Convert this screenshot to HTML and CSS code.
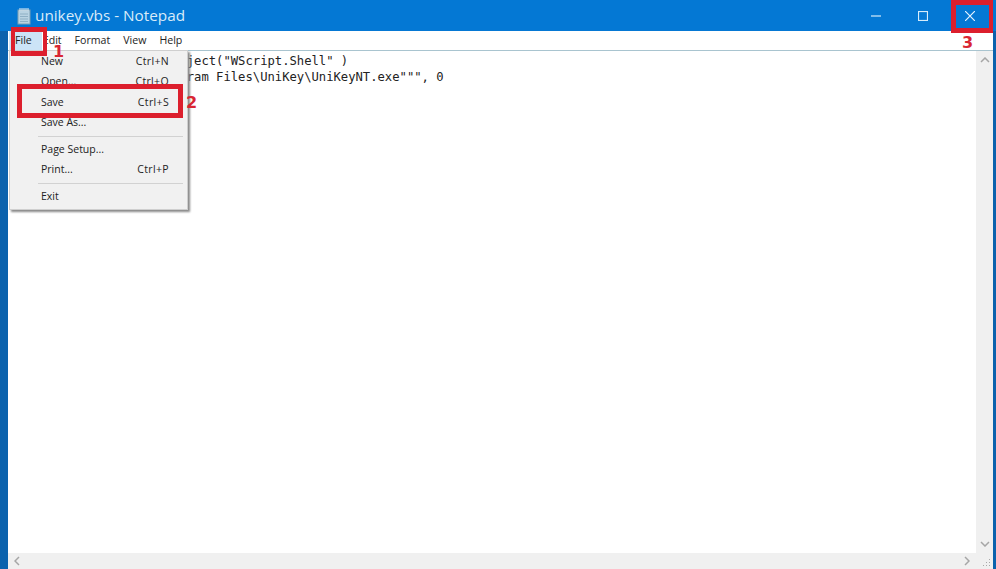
FILE: index.html
```html
<!DOCTYPE html>
<html lang="en">
<head>
<meta charset="utf-8">
<title>unikey.vbs - Notepad</title>
<link rel="stylesheet" href="styles.css">
</head>
<body>
<div class="window">
  <header class="titlebar">
    <svg class="app-icon" width="16" height="18" viewBox="0 0 16 18">
      <rect x="2" y="3" width="12" height="14" fill="#b9d3e2" stroke="#7f9fb2"/>
      <path d="M4 1v3M6 1v3M8 1v3M10 1v3M12 1v3" stroke="#e8f2f8" stroke-width="1"/>
      <path d="M4 7h8M4 9.5h8M4 12h8M4 14.5h8" stroke="#8fb0c4"/>
    </svg>
    <span class="title">unikey.vbs - Notepad</span>
    <div class="controls">
      <button class="ctl"><svg width="10" height="10" viewBox="0 0 10 10"><path d="M0 5h10" stroke="#d6ecfb" stroke-width="1.2"/></svg></button>
      <button class="ctl"><svg width="10" height="10" viewBox="0 0 10 10"><rect x=".5" y=".5" width="9" height="9" fill="none" stroke="#d6ecfb" stroke-width="1.2"/></svg></button>
      <button class="ctl"><svg width="10" height="10" viewBox="0 0 10 10"><path d="M0 0l10 10M10 0L0 10" stroke="#e6f4ff" stroke-width="1.2"/></svg></button>
    </div>
  </header>
  <nav class="menubar">
    <span class="mi active">File</span>
    <span class="mi">Edit</span>
    <span class="mi">Format</span>
    <span class="mi">View</span>
    <span class="mi">Help</span>
  </nav>
  <div class="client">
    <div class="editor-row">
      <pre class="editor">Set WshShell = CreateObject("WScript.Shell" )
WshShell.Run """C:\Program Files\UniKey\UniKeyNT.exe""", 0</pre>
      <div class="vscroll">
        <svg width="10" height="6" viewBox="0 0 10 6"><path d="M1 5l4-4 4 4" fill="none" stroke="#a6a6a6" stroke-width="1.5"/></svg>
        <svg width="10" height="6" viewBox="0 0 10 6"><path d="M1 1l4 4 4-4" fill="none" stroke="#a6a6a6" stroke-width="1.5"/></svg>
      </div>
    </div>
    <div class="hrow">
      <div class="hscroll">
        <svg width="6" height="10" viewBox="0 0 6 10"><path d="M5 1L1 5l4 4" fill="none" stroke="#a6a6a6" stroke-width="1.5"/></svg>
        <svg width="6" height="10" viewBox="0 0 6 10"><path d="M1 1l4 4-4 4" fill="none" stroke="#a6a6a6" stroke-width="1.5"/></svg>
      </div>
      <div class="grip">
        <svg width="10" height="10" viewBox="0 0 10 10"><path d="M8 1h1v1H8zM5 4h1v1H5zM8 4h1v1H8zM2 7h1v1H2zM5 7h1v1H5zM8 7h1v1H8z" fill="#a8a8a8"/></svg>
      </div>
    </div>
  </div>
</div>

<div class="menu">
  <div class="row"><span>New</span><span class="key">Ctrl+N</span></div>
  <div class="row"><span>Open...</span><span class="key">Ctrl+O</span></div>
  <div class="row"><span>Save</span><span class="key">Ctrl+S</span></div>
  <div class="row"><span>Save As...</span></div>
  <div class="sep"></div>
  <div class="row"><span>Page Setup...</span></div>
  <div class="row"><span>Print...</span><span class="key">Ctrl+P</span></div>
  <div class="sep"></div>
  <div class="row"><span>Exit</span></div>
</div>

<div class="mark mark-file"></div>
<div class="mark mark-save"></div>
<div class="mark mark-close"></div>
<span class="num num-1">1</span>
<span class="num num-2">2</span>
<span class="num num-3">3</span>
</body>
</html>
```
FILE: styles.css
```css
* { box-sizing: border-box; }
html, body { margin: 0; height: 100%; }
body {
  position: relative;
  width: 996px;
  height: 569px;
  overflow: hidden;
  background: #fff;
  font-family: "Open Sans", "Noto Sans", "Liberation Sans", sans-serif;
}
.window {
  width: 996px;
  height: 569px;
  display: flex;
  flex-direction: column;
  background: #0b62ad;
  padding: 0 3px 0 8px;
}
.titlebar {
  height: 31px;
  margin: 0 -3px 0 -8px;
  padding: 0 3px 0 16px;
  background: #0478d4;
  display: flex;
  align-items: center;
  color: #dcecf8;
  flex: none;
}
.app-icon { flex: none; }
.title {
  margin: 0 0 2px 3px;
  font-family: "Open Sans", "Noto Sans", sans-serif;
  font-size: 15.3px;
  color: #d9ebf9;
}
.controls { margin-left: auto; display: flex; }
.ctl {
  width: 47px;
  height: 31px;
  padding: 0;
  border: 0;
  background: none;
  display: flex;
  align-items: center;
  justify-content: center;
}
.menubar {
  height: 19px;
  flex: none;
  background: #fff;
  display: flex;
  align-items: center;
  padding-left: 0.5px;
  font-size: 10.6px;
  color: #222;
}
.mi { padding: 0 6.5px; height: 19px; line-height: 19px; }
.mi.active { background: #cce4f7; padding-right: 10px; margin-right: -5.5px; }
.client {
  flex: 1;
  min-height: 0;
  display: flex;
  flex-direction: column;
  border-top: 1px solid #a9c4cf;
  background: #fff;
}
.editor-row { flex: 1; min-height: 0; display: flex; }
.editor {
  flex: 1;
  margin: 0;
  padding: 2px 0 0 10px;
  font-family: "DejaVu Sans Mono", "Liberation Mono", monospace;
  font-size: 12.2px;
  line-height: 16px;
  color: #222;
  white-space: pre;
}
.vscroll {
  width: 17px;
  background: #f0f0f0;
  display: flex;
  flex-direction: column;
  justify-content: space-between;
  align-items: center;
  padding: 6px 0;
}
.hrow { height: 16px; flex: none; display: flex; }
.hscroll {
  flex: 1;
  background: #f0f0f0;
  display: flex;
  align-items: center;
  justify-content: space-between;
  padding: 0 6px;
}
.grip {
  width: 17px;
  background: #f0f0f0;
  display: flex;
  align-items: flex-end;
  justify-content: flex-end;
  padding: 0 2px 1px 0;
}
.menu {
  position: absolute;
  left: 9px;
  top: 50px;
  width: 179px;
  height: 160px;
  padding: 0;
  background: #f1f1f1;
  border: 1px solid #cfcfcf;
  box-shadow: 2px 2px 2px #8a8a8a;
  font-size: 10.5px;
  color: #222;
}
.row {
  height: 20.3px;
  padding: 0 18px 0 31px;
  display: flex;
  align-items: center;
  justify-content: space-between;
}
.key { letter-spacing: 0.35px; }
.sep {
  height: 1px;
  margin: 3.5px 4px 2px 28px;
  background: #d2d2d2;
}
.mark {
  position: absolute;
  border: 5px solid #dc1f2d;
}
.mark-file { left: 11px; top: 27px; width: 36px; height: 29px; border-left-width: 4px; border-right-width: 4px; }
.mark-save { left: 17px; top: 84px; width: 166px; height: 34px; }
.mark-close { left: 951px; top: 0; width: 42px; height: 33px; border-right-width: 4px; }
.num {
  position: absolute;
  font-family: "DejaVu Sans", "Noto Sans", sans-serif;
  font-weight: 700;
  font-size: 16px;
  line-height: 16px;
  color: #d92632;
}
.num-1 { left: 53px; top: 44px; }
.num-2 { left: 186px; top: 95px; }
.num-3 { left: 962px; top: 35px; }
```
